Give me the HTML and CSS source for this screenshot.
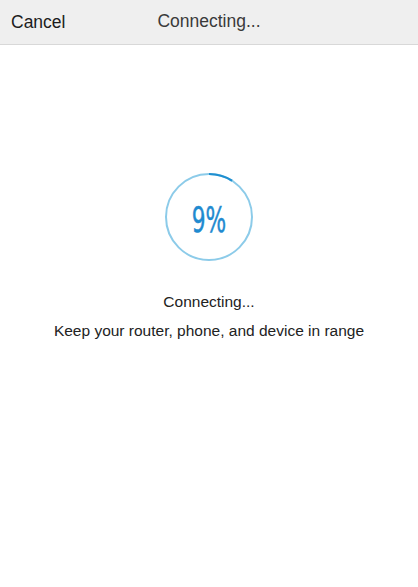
FILE: index.html
```html
<!DOCTYPE html>
<html lang="en">
<head>
  <meta charset="UTF-8">
  <title>Connecting</title>
  <link rel="stylesheet" href="styles.css">
</head>
<body>
  <header class="navbar">
    <span class="nav-cancel">Cancel</span>
    <span class="nav-title">Connecting...</span>
  </header>

  <main class="content">
    <div class="progress">
      <svg class="ring" width="90" height="90" viewBox="0 0 90 90">
        <circle cx="45" cy="45" r="43" fill="none" stroke="#8ccbe9" stroke-width="2"/>
        <circle cx="45" cy="45" r="43" fill="none" stroke="#1f8fd0" stroke-width="2.2"
          stroke-dasharray="24.3 400" transform="rotate(-90 45 45)"/>
      </svg>
      <span class="percent">9%</span>
    </div>
    <p class="status">Connecting...</p>
    <p class="hint">Keep your router, phone, and device in range</p>
  </main>
</body>
</html>
```

FILE: styles.css
```css
body {
  margin: 0;
  background: #fff;
  font-family: 'Liberation Sans', Arial, sans-serif;
  color: #222;
}

.navbar {
  position: relative;
  height: 44px;
  background: #efefef;
  border-bottom: 1px solid #d8d8d8;
  display: flex;
  align-items: center;
  justify-content: center;
}

.nav-cancel {
  position: absolute;
  left: 11px;
  top: 12px;
  font-size: 17.5px;
  color: #1c1c1c;
}

.nav-title {
  font-size: 17.5px;
  color: #3a3a3a;
  margin-top: -2px;
}

.content {
  display: flex;
  flex-direction: column;
  align-items: center;
  padding-top: 127px;
}

.progress {
  position: relative;
  width: 90px;
  height: 90px;
}

.ring {
  display: block;
}

.percent {
  position: absolute;
  left: 0;
  right: 0;
  top: 28px;
  text-align: center;
  font-family: 'DejaVu Sans', sans-serif;
  font-size: 35px;
  line-height: 1.164;
  color: #1f8ad0;
  -webkit-text-stroke: 0.5px #1f8ad0;
  transform: scaleX(0.62);
}

.status {
  margin: 31px 0 0;
  font-size: 15.5px;
  color: #222;
}

.hint {
  margin: 11px 0 0;
  font-size: 15.5px;
  color: #222;
}
```
